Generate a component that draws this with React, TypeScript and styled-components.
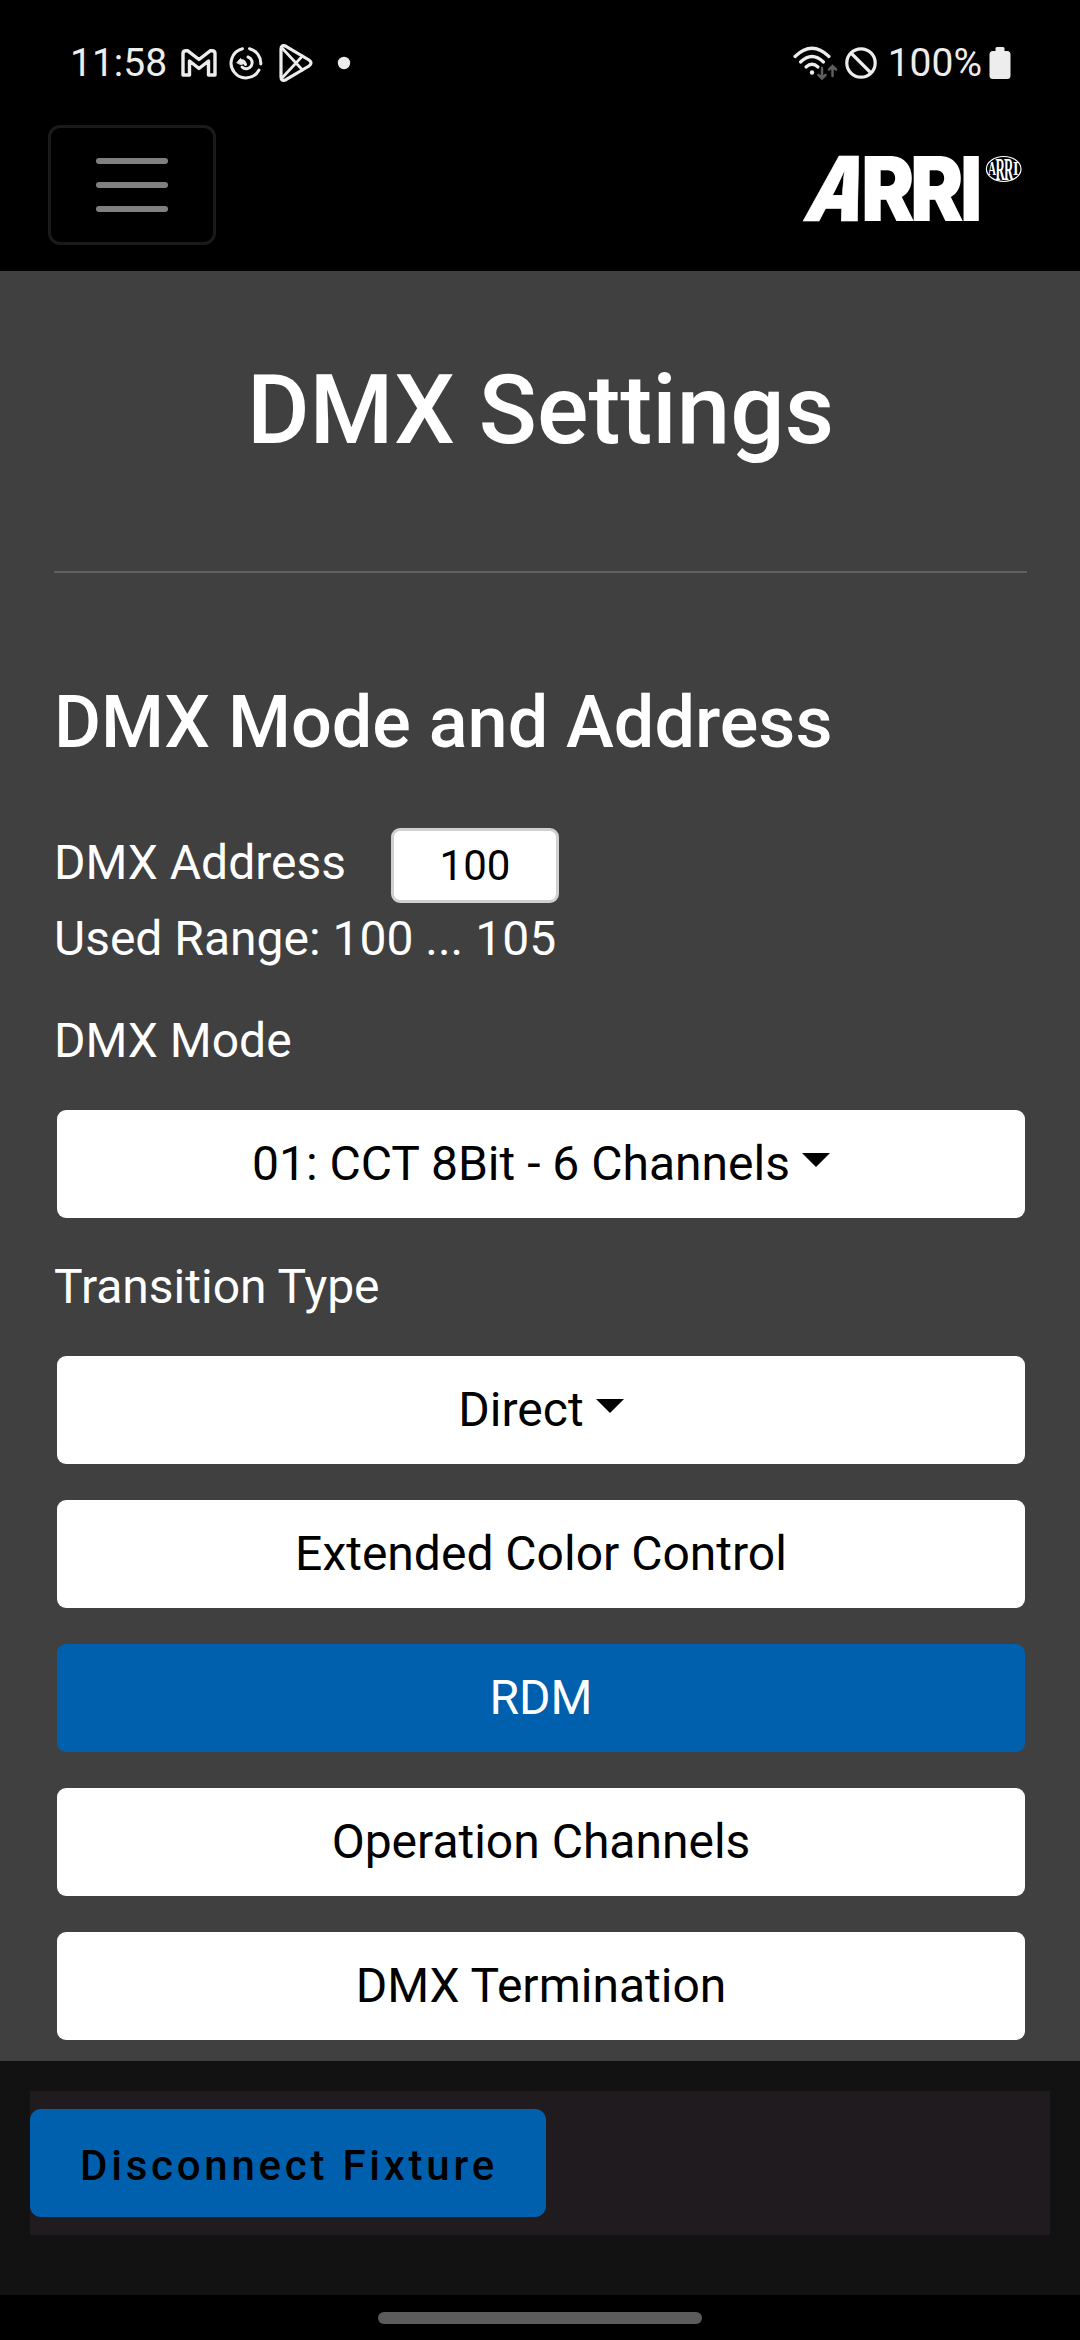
import React from "react";
import styled, { createGlobalStyle } from "styled-components";

const GlobalStyle = createGlobalStyle`
  *, *::before, *::after { box-sizing: border-box; }
  body {
    margin: 0;
    background: #000;
    font-family: Roboto, "Noto Sans", sans-serif;
  }
  button, input { font-family: inherit; margin: 0; }
`;

const Screen = styled.div`
  display: flex;
  flex-direction: column;
  width: 1080px;
  height: 2340px;
  background: #000;
  color: #fff;
`;

const StatusBar = styled.div`
  display: flex;
  justify-content: space-between;
  align-items: center;
  height: 125px;
  padding: 0 69px 0 70px;
  color: #ededed;
`;

const StatusGroup = styled.div`
  display: flex;
  align-items: center;
`;

const StatusText = styled.span<{ $left?: number; $right?: number }>`
  margin: 0 ${(p) => p.$right ?? 0}px 0 ${(p) => p.$left ?? 0}px;
  font-size: 39px;
  line-height: 46px;
`;

const StatusIcon = styled.svg<{ $left?: number }>`
  display: block;
  margin-left: ${(p) => p.$left ?? 0}px;
`;

const Navbar = styled.nav`
  display: flex;
  justify-content: space-between;
  align-items: flex-start;
  height: 146px;
  padding: 0 57px 26px 48px;
`;

const Toggler = styled.button`
  display: flex;
  flex-direction: column;
  align-items: center;
  justify-content: center;
  gap: 18px;
  width: 168px;
  height: 120px;
  padding: 0;
  border: 3px solid #1a1a1a;
  border-radius: 12px;
  background: transparent;
`;

const TogglerLine = styled.span`
  width: 72px;
  height: 6px;
  border-radius: 3px;
  background: #808080;
`;

const Logo = styled.svg`
  display: block;
  margin-top: 29px;
  overflow: visible;
`;

const Main = styled.main`
  display: flex;
  flex-direction: column;
  height: 1790px;
  padding: 82px 53px 0 54px;
  background: #404040;
`;

const Title = styled.h1`
  margin: 0;
  font-size: 96px;
  line-height: 115px;
  font-weight: 500;
  text-align: center;
`;

const Divider = styled.hr`
  width: 100%;
  height: 2px;
  margin: 103px 0 107px;
  border: 0;
  background: #606060;
`;

const SectionTitle = styled.h2`
  margin: 0 0 61px;
  font-size: 72px;
  line-height: 86px;
  font-weight: 500;
`;

const AddressRow = styled.div`
  display: flex;
  height: 76px;
`;

const Label = styled.label<{ $top?: number; $bottom?: number }>`
  display: block;
  padding: ${(p) => p.$top ?? 0}px 0 ${(p) => p.$bottom ?? 0}px;
  font-size: 48px;
  line-height: 72px;
`;

const AddressLabel = styled(Label)`
  width: 337px;
`;

const AddressInput = styled.input`
  width: 168px;
  height: 75px;
  margin-top: 1px;
  padding: 0;
  border: 3px solid #d0d0d0;
  border-radius: 9px;
  background: #fff;
  color: #000;
  font-size: 42px;
  text-align: center;
`;

const Stack = styled.div`
  display: flex;
  flex-direction: column;
  gap: 36px;
  padding: 0 2px 0 3px;
`;

const Button = styled.button<{ $active?: boolean }>`
  display: flex;
  align-items: center;
  justify-content: center;
  width: 100%;
  height: 108px;
  padding: 0;
  border: 0;
  border-radius: 9px;
  background: ${(p) => (p.$active ? "#0060ae" : "#fff")};
  color: ${(p) => (p.$active ? "#fff" : "#000")};
  font-size: 48px;
  line-height: 72px;
`;

const Caret = styled.span`
  margin: -8px 0 0 12px;
  border-top: 14px solid #000;
  border-left: 14px solid transparent;
  border-right: 14px solid transparent;
`;

const Footer = styled.footer`
  height: 234px;
  padding: 30px;
  background: #121212;
`;

const FooterPanel = styled.div`
  display: flex;
  align-items: center;
  height: 144px;
  background: #1f1b1e;
`;

const DisconnectButton = styled.button`
  width: 516px;
  height: 108px;
  padding: 4px 0 0 2px;
  border: 0;
  border-radius: 11px;
  background: #0060ae;
  color: #000;
  font-size: 42px;
  font-weight: 500;
  letter-spacing: 3.75px;
`;

const NavigationBar = styled.div`
  display: flex;
  justify-content: center;
  height: 45px;
  padding-top: 17px;
`;

const HomeHandle = styled.div`
  width: 324px;
  height: 12px;
  border-radius: 6px;
  background: #5c5c5c;
`;

const MailIcon = () => (
  <StatusIcon $left={14} width="36" height="28" viewBox="0 0 36 28" fill="none" stroke="#ededed" strokeWidth="3.4" strokeLinejoin="round">
    <path d="M2 4.5 Q2 1.7 5 1.7 L6.5 1.7 L18 10.5 L29.5 1.7 L31 1.7 Q34 1.7 34 4.5 V26 H27.5 V12 L18 19.5 L8.5 12 V26 H2 Z" />
  </StatusIcon>
);

const SpiralIcon = () => (
  <StatusIcon $left={12} width="34" height="34" viewBox="0 0 34 34" fill="none" stroke="#ededed" strokeWidth="3" strokeLinecap="round">
    <path d="M13.5 2.7 A14.8 14.8 0 1 0 30 24" />
    <path d="M20.5 2.7 A14.8 14.8 0 0 1 31.8 18" />
    <path d="M19 11 A6 6 0 1 1 13 21" />
    <path d="M11 15.5 Q15 13 16.5 18.5" />
    <path d="M8 16.5 L11.5 12.5 L15.5 17.5 L12 18.5 Z" fill="#ededed" strokeWidth="1" strokeLinejoin="round" />
  </StatusIcon>
);

const PlayIcon = () => (
  <StatusIcon $left={16} width="34" height="38" viewBox="0 0 34 38" fill="none" stroke="#ededed" strokeWidth="3.2" strokeLinejoin="round" strokeLinecap="round">
    <path d="M2 5 Q2 0 7 2.3 L30 16 Q34 19 30 22 L7 35.7 Q2 38 2 33 Z" />
    <path d="M3 4 L23.5 26 M3 34 L23.5 12" strokeWidth="2.7" />
  </StatusIcon>
);

const WifiIcon = () => (
  <StatusIcon width="45" height="36" viewBox="0 0 45 36" fill="none" stroke="#ededed" strokeWidth="3.2" strokeLinecap="round">
    <path d="M2 11.5 Q19 -5 36 11.5" />
    <path d="M7.5 17 Q19 6 30.5 17" />
    <path d="M13 22 Q19 16.5 25 22" />
    <circle cx="19" cy="27.5" r="2.2" fill="#ededed" stroke="none" />
    <path d="M29 23 V33 M25.5 30 L29 33.5 L32.5 30 M39.5 31 V21 M36 24.5 L39.5 21 L43 24.5" stroke="#5e5e5e" strokeWidth="2.5" />
  </StatusIcon>
);

const BlockedIcon = () => (
  <StatusIcon $left={7} width="32" height="32" viewBox="0 0 32 32" fill="none" stroke="#ededed" strokeWidth="3.2">
    <circle cx="16" cy="16" r="14.2" />
    <path d="M6 6 L26 26" />
  </StatusIcon>
);

const BatteryIcon = () => (
  <StatusIcon width="22" height="32" viewBox="0 0 22 32" fill="#ededed">
    <rect x="6.5" y="0" width="9" height="8" rx="1.5" />
    <rect x="0.5" y="4" width="21" height="28" rx="3.5" />
  </StatusIcon>
);

const BrandLogo = () => (
  <Logo width="222" height="70" viewBox="0 0 222 70" fill="#fff" fontFamily="Inter, sans-serif" fontWeight="900" role="img" aria-label="ARRI">
    <text transform="matrix(0.81 0 -0.29 1 0.5 67)" fontSize="89.4" stroke="#fff" strokeWidth="0.6">A</text>
    <text transform="matrix(0.9 0 0 1 60 67)" fontSize="89.4">R</text>
    <text transform="matrix(0.9 0 0 1 109 67)" fontSize="89.4">R</text>
    <text transform="matrix(0.86 0 0 1 159 67)" fontSize="89.4">I</text>
    <ellipse cx="202.7" cy="15" rx="17.3" ry="12.5" fill="none" stroke="#fff" strokeWidth="1.2" />
    <g fontFamily="'Liberation Serif', serif" fontWeight="700">
      <text transform="matrix(0.58 0 0 1 187 21)" fontSize="19">A</text>
      <text transform="matrix(0.42 0 0 1 194.5 25.5)" fontSize="31">R</text>
      <text transform="matrix(0.42 0 0 1 203 25.5)" fontSize="31">R</text>
      <text transform="matrix(0.75 0 0 1 212 21)" fontSize="19">I</text>
    </g>
  </Logo>
);

const ACTIONS = [
  { label: "Extended Color Control", active: false },
  { label: "RDM", active: true },
  { label: "Operation Channels", active: false },
  { label: "DMX Termination", active: false },
];

export default function App() {
  return (
    <Screen>
      <GlobalStyle />
      <StatusBar>
        <StatusGroup>
          <StatusText>11:58</StatusText>
          <MailIcon />
          <SpiralIcon />
          <PlayIcon />
          <StatusIcon $left={24} width="14" height="14" viewBox="0 0 14 14" fill="#ededed">
            <circle cx="7" cy="7" r="6.2" />
          </StatusIcon>
        </StatusGroup>
        <StatusGroup>
          <WifiIcon />
          <BlockedIcon />
          <StatusText $left={11} $right={7}>100%</StatusText>
          <BatteryIcon />
        </StatusGroup>
      </StatusBar>
      <Navbar>
        <Toggler aria-label="Toggle navigation">
          <TogglerLine />
          <TogglerLine />
          <TogglerLine />
        </Toggler>
        <BrandLogo />
      </Navbar>
      <Main>
        <Title>DMX Settings</Title>
        <Divider />
        <SectionTitle>DMX Mode and Address</SectionTitle>
        <AddressRow>
          <AddressLabel htmlFor="address">DMX Address</AddressLabel>
          <AddressInput id="address" defaultValue="100" />
        </AddressRow>
        <Label as="div">Used Range: 100 ... 105</Label>
        <Label as="div" $top={30} $bottom={33}>DMX Mode</Label>
        <Stack>
          <Button>01: CCT 8Bit - 6 Channels<Caret /></Button>
        </Stack>
        <Label as="div" $top={33} $bottom={33}>Transition Type</Label>
        <Stack>
          <Button>Direct<Caret /></Button>
          {ACTIONS.map((a) => (
            <Button key={a.label} $active={a.active}>{a.label}</Button>
          ))}
        </Stack>
      </Main>
      <Footer>
        <FooterPanel>
          <DisconnectButton>Disconnect Fixture</DisconnectButton>
        </FooterPanel>
      </Footer>
      <NavigationBar>
        <HomeHandle />
      </NavigationBar>
    </Screen>
  );
}
